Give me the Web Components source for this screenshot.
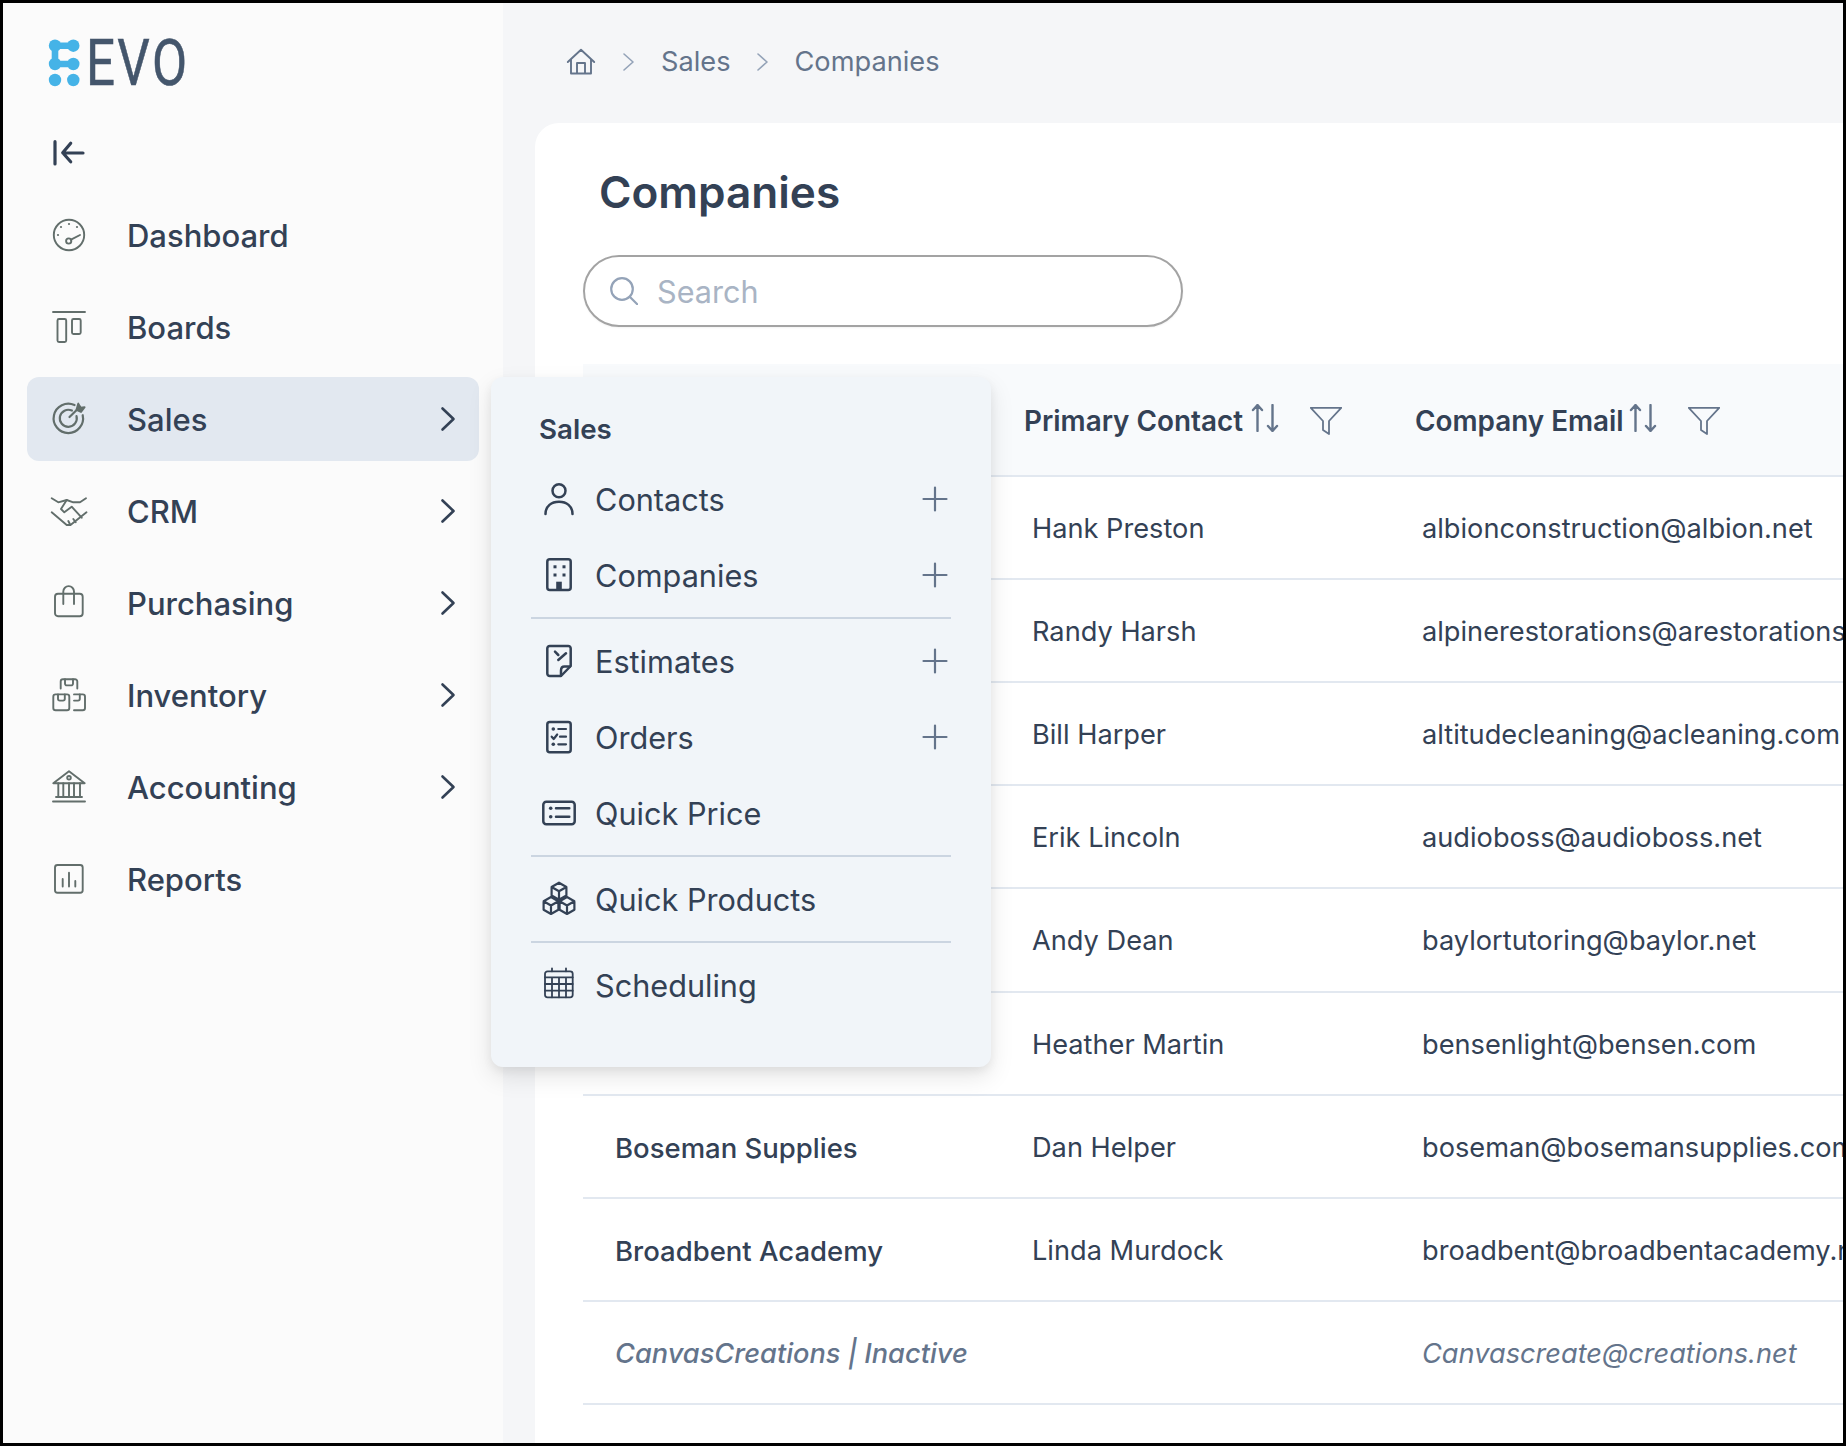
<!DOCTYPE html>
<html><head><meta charset="utf-8">
<style>
html,body{margin:0;padding:0;background:#000;}
body{width:1846px;height:1446px;overflow:hidden;font-family:Inter,"Liberation Sans",sans-serif;color:#334155;}
</style></head>
<body>
<evo-app>
  <evo-sidebar slot="sidebar">
    <evo-nav-item icon="dashboard">Dashboard</evo-nav-item>
    <evo-nav-item icon="boards">Boards</evo-nav-item>
    <evo-nav-item icon="target" chevron active>Sales</evo-nav-item>
    <evo-nav-item icon="handshake" chevron>CRM</evo-nav-item>
    <evo-nav-item icon="bag" chevron>Purchasing</evo-nav-item>
    <evo-nav-item icon="boxes" chevron>Inventory</evo-nav-item>
    <evo-nav-item icon="bank" chevron>Accounting</evo-nav-item>
    <evo-nav-item icon="chart">Reports</evo-nav-item>
  </evo-sidebar>
  <evo-main slot="main">
    <evo-breadcrumb></evo-breadcrumb>
    <evo-card>
      <evo-search></evo-search>
      <evo-table>
        <evo-row contact="Hank Preston" email="albionconstruction@albion.net"></evo-row>
        <evo-row contact="Randy Harsh" email="alpinerestorations@arestorations.com"></evo-row>
        <evo-row contact="Bill Harper" email="altitudecleaning@acleaning.com"></evo-row>
        <evo-row contact="Erik Lincoln" email="audioboss@audioboss.net"></evo-row>
        <evo-row contact="Andy Dean" email="baylortutoring@baylor.net"></evo-row>
        <evo-row contact="Heather Martin" email="bensenlight@bensen.com"></evo-row>
        <evo-row name="Boseman Supplies" contact="Dan Helper" email="boseman@bosemansupplies.com"></evo-row>
        <evo-row name="Broadbent Academy" contact="Linda Murdock" email="broadbent@broadbentacademy.net"></evo-row>
        <evo-row inactive name="CanvasCreations | Inactive" email="Canvascreate@creations.net"></evo-row>
      </evo-table>
    </evo-card>
  </evo-main>
  <evo-flyout slot="overlay">
    <evo-fly-item icon="person" plus>Contacts</evo-fly-item>
    <evo-fly-item icon="building" plus>Companies</evo-fly-item>
    <evo-fly-sep></evo-fly-sep>
    <evo-fly-item icon="estimate" plus>Estimates</evo-fly-item>
    <evo-fly-item icon="orders" plus>Orders</evo-fly-item>
    <evo-fly-item icon="price">Quick Price</evo-fly-item>
    <evo-fly-sep></evo-fly-sep>
    <evo-fly-item icon="cubes">Quick Products</evo-fly-item>
    <evo-fly-sep></evo-fly-sep>
    <evo-fly-item icon="calendar">Scheduling</evo-fly-item>
  </evo-flyout>
</evo-app>
<script>
function hex(cx,cy,R){const a=.87*R,b=.5*R;return `<path d="M${cx} ${cy-R}L${cx+a} ${cy-b}V${cy+b}L${cx} ${cy+R}L${cx-a} ${cy+b}V${cy-b}Z M${cx-a} ${cy-b}L${cx} ${cy}L${cx+a} ${cy-b}M${cx} ${cy}V${cy+R}"/>`;}
const ICONS={
dashboard:`<circle cx="16" cy="16" r="15.2"/><circle cx="15.7" cy="22" r="2.6"/><path d="M18 20.7L27 16"/><g fill="currentColor" stroke="none"><circle cx="16" cy="5" r="1.1"/><circle cx="8" cy="8" r="1.1"/><circle cx="24" cy="8" r="1.1"/><circle cx="5" cy="16" r="1.1"/></g>`,
boards:`<path d="M0 1H32"/><rect x="4.5" y="8" width="8.7" height="23" rx="1.5"/><rect x="19" y="8" width="8.7" height="15" rx="1.5"/>`,
target:`<path d="M21.5 2A14.7 14.7 0 1 0 29.7 12.2" stroke-width="2.2"/><path d="M18.9 7.6A8.5 8.5 0 1 0 23.5 13.1" stroke-width="2.2"/><path d="M16.5 14L27 3.7" stroke-width="2.2"/><path d="M25.3 .6L23.5 6.8L28 9L31.6 4.2L27.5 4.6Z" fill="currentColor"/>`,
handshake:`<path d="M-1.3 3.3L5.3 7.3L13.7 5L20.3 7.3H27L33 3.3"/><path d="M13.7 5L8 14L11.3 17.3L18.7 11.7L28.7 22.7"/><path d="M-1.3 17.3L13.7 30H17.5L33.5 17.3"/><path d="M15.3 26L17 29.3M20.3 24L22.7 27.3"/>`,
bag:`<rect x="2" y="6.8" width="27.7" height="22.4" rx="3"/><path d="M10.3 17V4.5A5.3 5.3 0 0 1 21 4.5V17"/>`,
boxes:`<path d="M7.7 9.5V2.5A2.3 2.3 0 0 1 10 .2H22A2.3 2.3 0 0 1 24.3 2.5V9.5"/><path d="M12 .2V4.5A1.8 1.8 0 0 0 13.8 6.4H18.2A1.8 1.8 0 0 0 20 4.5V.2"/><rect x=".3" y="15.4" width="16" height="15.8" rx="2.3"/><path d="M5 15.4V19.8A1.8 1.8 0 0 0 6.8 21.6H10A1.8 1.8 0 0 0 11.8 19.8V15.4"/><path d="M21 15.4H29.7A2.3 2.3 0 0 1 32 17.7V28.9A2.3 2.3 0 0 1 29.7 31.2H21"/><path d="M21 21.6H25A1.8 1.8 0 0 0 26.8 19.8V15.4"/>`,
bank:`<path d="M.3 12.2L16 .2L31.7 12.2Z"/><circle cx="16" cy="6.8" r="1.8"/><path d="M5.3 12.2V25M10.3 12.2V25M16 12.2V25M21 12.2V25M27 12.2V25"/><path d="M3 26H29M0 30.5H32"/>`,
chart:`<rect x="2" y="2" width="27.7" height="27.7" rx="2.5"/><path d="M9.7 23.5V16M16 23.5V9.7M22.3 23.5V18"/>`,
person:`<circle cx="16" cy="7.7" r="6.5"/><path d="M2.5 31C2.5 23 8.5 18.7 16 18.7S29.5 23 29.5 31"/>`,
building:`<rect x="4.3" y=".3" width="23.4" height="30.7" rx="2.5"/><g fill="currentColor" stroke="none"><rect x="10.5" y="6.3" width="3" height="3"/><rect x="19.5" y="6.3" width="3" height="3"/><rect x="10.5" y="14.5" width="3" height="3"/><rect x="19.5" y="14.5" width="3" height="3"/><rect x="13.2" y="22.7" width="5.6" height="8.3"/></g>`,
estimate:`<path d="M6.8 1H25.2A2.5 2.5 0 0 1 27.7 3.5V21L18 31H6.8A2.5 2.5 0 0 1 4.3 28.5V3.5A2.5 2.5 0 0 1 6.8 1Z"/><path d="M27 21.5H21.5Q18 21.5 18 25.5V30.5"/><path d="M12 6.7L15.3 10M15.3 15L23 8.3"/>`,
orders:`<rect x="4.3" y="1" width="23.4" height="30.3" rx="2.5"/><path d="M15.3 8H23M17 15.7H23M15.3 23.3H23M8.7 15.7L10.7 18L14.2 13.5" stroke-width="2.2"/><g fill="currentColor" stroke="none"><circle cx="10.3" cy="8" r="1.8"/><circle cx="10.3" cy="23.3" r="1.8"/></g>`,
price:`<rect x=".3" y="4.7" width="31.4" height="22.6" rx="3"/><path d="M13 11.3H26.3M13 19.7H26.3"/><g fill="currentColor" stroke="none"><circle cx="7.7" cy="11.3" r="1.8"/><circle cx="7.7" cy="19.7" r="1.8"/></g>`,
cubes:`<g stroke-width="2.2">${hex(16,8.2,8.5)+hex(8,22.5,8.5)+hex(24,22.5,8.5)}</g>`,
calendar:`<g stroke-width="1.8"><rect x="2" y="2.3" width="27.7" height="26" rx="2.5"/><path d="M9 -.7V2.3M23 -.7V2.3M2 8.3H29.7M2 15H29.7M2 21.7H29.7M9 8.3V28.3M16 8.3V28.3M23 8.3V28.3"/></g>`
};
function def(tag,css,html,init){
  const t=document.createElement('template');
  t.innerHTML=`<style>${css}</style>${html}`;
  customElements.define(tag,class extends HTMLElement{
    constructor(){super();this.attachShadow({mode:'open'}).appendChild(t.content.cloneNode(true));}
    connectedCallback(){if(init)init(this,this.shadowRoot);}
  });
}
def('evo-app',`:host{display:flex;width:1840px;height:1440px;margin:3px;position:relative;overflow:hidden;background:#f5f6f8;}
 ::slotted([slot=overlay]){position:absolute;left:488px;top:374px;}`,
 `<slot name="sidebar"></slot><slot name="main"></slot><slot name="overlay"></slot>`);
def('evo-logo',`:host{display:flex;align-items:center;height:56px;}
 svg{display:block;overflow:visible;flex:none;margin-right:6.4px}
 .t{font:400 65px/56px Roboto,sans-serif;color:#44566c;transform:scaleX(.785);transform-origin:0 50%;letter-spacing:3px;white-space:nowrap;-webkit-text-stroke:.6px #44566c}`,
 `<svg width="31" height="48" viewBox="0 0 31 48" fill="none"><path d="M6 6.7H24.3M6 25H24.3M6 6.7V25" stroke="#45b3e7" stroke-width="6.6"/><g fill="#45b3e7"><circle cx="6" cy="6.7" r="6.2"/><circle cx="24.3" cy="6.7" r="6.2"/><circle cx="6" cy="25" r="6.2"/><circle cx="24.3" cy="25" r="6.2"/><circle cx="6" cy="41" r="6.2"/><circle cx="24.3" cy="41" r="6.2"/></g></svg><span class="t">EVO</span>`);
def('evo-sidebar',`:host{display:flex;flex-direction:column;box-sizing:border-box;width:500px;flex:none;background:#fbfbfb;padding:32px 21px 0 24px;}
 evo-logo{margin:0 0 0 22px}
 .c{margin:46px 0 0 26px;height:32px;width:32px;flex:none}
 svg{display:block}
 nav{display:flex;flex-direction:column;gap:8px;margin-top:24px}`,
 `<evo-logo></evo-logo><div class="c"><svg width="32" height="32" viewBox="0 0 32 32" fill="none" stroke="#334155" stroke-width="3.2" stroke-linecap="round" stroke-linejoin="round"><path d="M2 4.7V27M30 16H10M17.7 6.3L9.7 15.7L17.7 24.7"/></svg></div><nav><slot></slot></nav>`);
def('evo-nav-item',`:host{display:flex;align-items:center;height:84px;box-sizing:border-box;padding:0 24px 0 26px;margin-right:3px;border-radius:12px;font:500 31px/36px Inter,sans-serif;color:#334155;}
 :host([active]){background:#e2e8f0}
 svg{display:block;overflow:visible;flex:none}
 .i{color:#626e6b;margin-right:42px}
 .l{flex:1;padding-top:1px}
 .ch{display:none}
 :host([chevron]) .ch{display:block}`,
 `<svg class="i" width="32" height="32" viewBox="0 0 32 32" fill="none" stroke="currentColor" stroke-width="1.9" stroke-linecap="round" stroke-linejoin="round"></svg><span class="l"><slot></slot></span><svg class="ch" width="14" height="24" viewBox="0 0 14 24" fill="none" stroke="#334155" stroke-width="2.6" stroke-linecap="round" stroke-linejoin="round"><path d="M1.5 1.5L12.5 12L1.5 22.5"/></svg>`,
 (h,s)=>{s.querySelector('.i').innerHTML=ICONS[h.getAttribute('icon')]});
def('evo-main',`:host{display:flex;flex-direction:column;flex:1;min-width:0;overflow:hidden;}`,`<slot></slot>`);
def('evo-breadcrumb',`:host{display:flex;align-items:center;height:120px;padding:0 0 3px 64px;box-sizing:border-box;font:400 27.2px/32px Inter,sans-serif;color:#64748b;flex:none}
 svg{display:block;flex:none;overflow:visible}
 .s{margin:0 27px 0 28px}
 .s2{margin:0 27px 0 26px}`,
 `<svg width="28" height="26" viewBox="0 0 28 26" fill="none" stroke="#64748b" stroke-width="1.9" stroke-linejoin="round" stroke-linecap="round"><path d="M.8 13L14 .8L27.2 13M4 10V24.5H24V10M10 24.5V14H18V24.5"/></svg>
 <svg class="s" width="11" height="18" viewBox="0 0 11 18" fill="none" stroke="#94a3b8" stroke-width="1.6" stroke-linecap="round" stroke-linejoin="round"><path d="M1 1L10 9L1 17"/></svg><span>Sales</span>
 <svg class="s2" width="11" height="18" viewBox="0 0 11 18" fill="none" stroke="#94a3b8" stroke-width="1.6" stroke-linecap="round" stroke-linejoin="round"><path d="M1 1L10 9L1 17"/></svg><span>Companies</span>`);
def('evo-card',`:host{display:flex;flex-direction:column;flex:1;margin-left:32px;background:#fff;border-radius:24px 0 0 0;padding:0 0 0 48px;min-height:0;overflow:hidden}
 h1{margin:39px 0 0 16px;font:600 44.1px/60px Inter,sans-serif;color:#334155;}`,
 `<h1>Companies</h1><slot></slot>`);
def('evo-search',`:host{display:flex;align-items:center;box-sizing:border-box;width:600px;height:72px;margin-top:33px;border:2px solid #a3a3a3;border-radius:36px;padding-left:25px;font:400 30.6px/36px Inter,sans-serif;color:#a9b4c4;flex:none;box-shadow:0 1px 2px rgba(0,0,0,.05)}
 svg{display:block;flex:none;margin-right:19px}
 span{padding-top:1px}`,
 `<svg width="28" height="28" viewBox="0 0 28 28" fill="none" stroke="#94a3b8" stroke-width="2.2" stroke-linecap="round"><circle cx="12" cy="12" r="10.8"/><path d="M20 20L27.3 27.3"/></svg><span>Search</span>`);
const SORT=`<svg class="so" width="28" height="28" viewBox="0 0 28 28" fill="none" stroke="#64748b" stroke-width="2.4" stroke-linecap="round" stroke-linejoin="round"><path d="M6.5 27V1M2 6L6.5 1L11 6M21.5 1V27M17 22L21.5 27L26 22"/></svg>`;
const FILTER=`<svg class="fi" width="32" height="28" viewBox="0 0 32 28" fill="none" stroke="#64748b" stroke-width="1.8" stroke-linejoin="round"><path d="M.8 .8H31.2L19 14V27L13 23V14Z"/></svg>`;
def('evo-table',`:host{display:block;margin-top:37px;width:1300px}
 .h{display:grid;grid-template-columns:441px 391px 1fr;height:111px;background:#f8fafc;border-bottom:2px solid #e2e8f0;align-items:center;font:600 27.85px/32px Inter,sans-serif;color:#334155}
 .c{display:flex;align-items:center;white-space:nowrap}
 .c span{padding-top:2px}
 .c:first-child{padding-left:33px}
 svg{display:block;flex:none}
 .so{margin:-4px 0 0 8px}.fi{margin:3px 0 0 31px}
 .c:nth-child(3) .so{margin-left:5.6px}`,
 `<div class="h"><div class="c"></div><div class="c"><span>Primary Contact</span>${SORT}${FILTER}</div><div class="c"><span>Company Email</span>${SORT}${FILTER}</div></div><slot></slot>`);
def('evo-row',`:host{display:grid;grid-template-columns:441px 391px 1fr;height:103.11px;box-sizing:border-box;padding-top:3px;border-bottom:2px solid #e2e8f0;align-items:center;font:400 27.2px/32px Inter,sans-serif;color:#334155;white-space:nowrap}
 :host([inactive]){font-style:italic;color:#64748b}
 .n{padding-left:32px;font-weight:500;font-size:27.5px}
 :host([inactive]) .n{font-size:27.2px}
 .v{padding-left:8px}
 .em{padding-left:7px}`,
 `<div class="n"></div><div class="v ct"></div><div class="v em"></div>`,
 (h,s)=>{s.querySelector('.n').textContent=h.getAttribute('name')||'';s.querySelector('.ct').textContent=h.getAttribute('contact')||'';s.querySelector('.em').textContent=h.getAttribute('email')||''});
def('evo-flyout',`:host{display:block;box-sizing:border-box;width:500px;height:690px;background:#f1f5f9;border-radius:12px;padding:36px 40px 0;box-shadow:0 10px 25px rgba(0,0,0,.1),0 4px 10px rgba(0,0,0,.06)}
 .t{font:600 27.7px/32px Inter,sans-serif;color:#334155;margin:0 0 16px 8px}`,
 `<div class="t">Sales</div><slot></slot>`);
def('evo-fly-item',`:host{display:flex;align-items:center;height:76px;padding:0 4px 0 12px;font:400 30.65px/36px Inter,sans-serif;color:#334155}
 svg{display:block;overflow:visible;flex:none}
 .i{margin-right:20px}
 .l{flex:1;padding-top:1px}
 .p{display:none}
 :host([plus]) .p{display:block}`,
 `<svg class="i" width="32" height="32" viewBox="0 0 32 32" fill="none" stroke="currentColor" stroke-width="2.5" stroke-linecap="round" stroke-linejoin="round"></svg><span class="l"><slot></slot></span><svg class="p" width="24" height="24" viewBox="0 0 24 24" fill="none" stroke="#64748b" stroke-width="2.2" stroke-linecap="round"><path d="M12 .5V23.5M.5 12H23.5"/></svg>`,
 (h,s)=>{s.querySelector('.i').innerHTML=ICONS[h.getAttribute('icon')]});
def('evo-fly-sep',`:host{display:block;height:2px;background:#cbd5e1;margin:4px 0}`,``);
</script>
</body></html>
